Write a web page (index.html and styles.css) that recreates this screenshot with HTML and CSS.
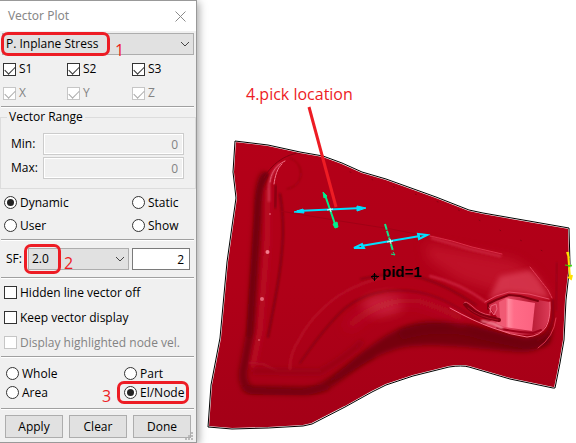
FILE: index.html
```html
<!DOCTYPE html>
<html lang="en">
<head>
<meta charset="utf-8">
<meta name="viewport" content="width=device-width, initial-scale=1">
<title>Vector Plot</title>
<link rel="stylesheet" href="styles.css">
</head>
<body>
<main class="workspace">
  <form class="dialog" onsubmit="return false">
    <header class="titlebar">
      <h1 class="title">Vector Plot</h1>
      <button class="close" type="button" aria-label="Close">
        <svg width="11" height="11" viewBox="0 0 11 11"><path d="M.5.5l10 10M10.5.5l-10 10" stroke="#8a8a8a" fill="none"/></svg>
      </button>
    </header>

    <div class="plot-type">
      <div class="dropdown ringed ring-type">
        <select aria-label="Vector type"><option>P. Inplane Stress</option></select>
        <svg class="chevron" width="10" height="6" viewBox="0 0 10 6"><path d="M1 1l4 4 4-4" stroke="#444" fill="none"/></svg>
      </div>
      <span class="note note-1">1</span>
    </div>

    <div class="checks">
      <label><input type="checkbox" checked>S1</label>
      <label><input type="checkbox" checked>S2</label>
      <label><input type="checkbox" checked>S3</label>
      <label class="off"><input type="checkbox" checked disabled>X</label>
      <label class="off"><input type="checkbox" checked disabled>Y</label>
      <label class="off"><input type="checkbox" checked disabled>Z</label>
    </div>

    <hr>

    <fieldset class="range">
      <legend>Vector Range</legend>
      <div class="fields">
        <label for="min">Min:</label><input id="min" type="text" value="0" disabled>
        <label for="max">Max:</label><input id="max" type="text" value="0" disabled>
      </div>
    </fieldset>

    <div class="radios mode">
      <label><input type="radio" name="mode" checked>Dynamic</label>
      <label><input type="radio" name="mode">Static</label>
      <label><input type="radio" name="mode">User</label>
      <label><input type="radio" name="mode">Show</label>
    </div>

    <hr>

    <div class="scale">
      <label for="sf">SF:</label>
      <div class="dropdown ringed ring-scale">
        <select id="sf"><option>2.0</option></select>
        <svg class="chevron" width="10" height="6" viewBox="0 0 10 6"><path d="M1 1l4 4 4-4" stroke="#444" fill="none"/></svg>
        <span class="note note-2">2</span>
      </div>
      <input type="text" value="2" aria-label="Scale factor">
    </div>

    <hr>

    <div class="options">
      <label><input type="checkbox">Hidden line vector off</label>
      <label><input type="checkbox">Keep vector display</label>
      <label class="off"><input type="checkbox" disabled>Display highlighted node vel.</label>
    </div>

    <hr>

    <div class="radios target">
      <label><input type="radio" name="target">Whole</label>
      <label><input type="radio" name="target">Part</label>
      <label><input type="radio" name="target">Area</label>
      <label class="ringed ring-target"><input type="radio" name="target" checked>El/Node</label>
      <span class="note note-3">3</span>
    </div>

    <hr>

    <div class="actions">
      <button type="button">Apply</button>
      <button type="button">Clear</button>
      <button type="button">Done</button>
      <svg class="grip" width="8" height="8" viewBox="0 0 8 8"><path d="M6 0h2v2H6zM3 3h2v2H3zM6 3h2v2H6zM0 6h2v2H0zM3 6h2v2H3zM6 6h2v2H6z" fill="#bbb"/></svg>
    </div>
  </form>

  <svg class="model" viewBox="197 0 379 443" role="img" aria-label="Stamped part with stress vectors">
    <defs>
      <linearGradient id="base" x1="0" y1="0" x2="0" y2="1">
        <stop offset="0" stop-color="#b40018"/><stop offset=".5" stop-color="#b00018"/><stop offset="1" stop-color="#a40017"/>
      </linearGradient>
      <linearGradient id="pocket" x1="0" y1="0" x2="1" y2="0">
        <stop offset="0" stop-color="#f0506c"/><stop offset=".12" stop-color="#ff8a9e"/><stop offset=".3" stop-color="#ff6c88"/><stop offset="1" stop-color="#fb6280"/>
      </linearGradient>
      <linearGradient id="bowl" x1="0" y1="0" x2="1" y2="0">
        <stop offset="0" stop-color="#c8203a"/><stop offset=".35" stop-color="#e44460"/><stop offset=".7" stop-color="#b81a34"/><stop offset="1" stop-color="#dc3c58"/>
      </linearGradient>
      <filter id="b1" x="-20%" y="-20%" width="140%" height="140%"><feGaussianBlur stdDeviation="1"/></filter>
      <filter id="b3" x="-30%" y="-30%" width="160%" height="160%"><feGaussianBlur stdDeviation="2.5"/></filter>
      <filter id="b6" x="-40%" y="-60%" width="180%" height="220%"><feGaussianBlur stdDeviation="6"/></filter>
      <path id="sheet" d="M235 141L268 145 300 152 323 156 342 163 362 172 386 179 436 197 469 210 483 213 569 228 570 264 566 300 564 340 560 363 555 388 553 388 510 379 469 367Q462 365 449 367L413 376 386 385 372 392 345 407 312 424 303 426 268 428 232 429 208 427 211 385 220 338 227 262 236 198 233 172Z"/>
      <clipPath id="clip"><use href="#sheet"/></clipPath>
    </defs>

    <use href="#sheet" fill="url(#base)"/>
    <g clip-path="url(#clip)" fill="none" stroke-linecap="round" stroke-linejoin="round">
      <!-- walls in shadow -->
      <path d="M264 176Q258 185 258 215L251 330 243 372Q242 389 254 390L303 391C330 391 345 368 370 355" stroke="#760010" stroke-width="8" filter="url(#b3)"/>
      <path d="M266 175Q258 184 257 215L249 335" stroke="#740010" stroke-width="5" filter="url(#b1)"/>
      <path d="M320 386C345 372 372 336 412 324C450 314 488 330 520 339Q548 343 553 319L552 336Q543 353 520 352C490 351 450 343 412 346C373 350 345 380 320 386Z" fill="#76000f" filter="url(#b3)"/>
      <path d="M404 334Q445 323 480 334L526 344 545 340" stroke="#700010" stroke-width="10" filter="url(#b3)"/>
      <path d="M246 388L252 391 302 393 326 387" stroke="#78000f" stroke-width="6" filter="url(#b3)"/>

      <!-- left bead -->
      <path d="M310 154C292 149 272 162 264 178" stroke="#850011"/>
      <path d="M290 158Q301 162 301 175Q299 187 287 189" stroke="#8c0013" stroke-width="1" filter="url(#b1)"/>
      <path d="M280 194Q283 211 283 234 282 263 275 300L268 337" stroke="#7c0011" stroke-width="2" filter="url(#b1)"/>
      <path d="M276 186L275 207" stroke="#850012" stroke-width="3" filter="url(#b1)"/>
      <path d="M268 190L267 245 260 330 253 366" stroke="#ba1028" stroke-width="5" filter="url(#b3)"/>
      <path d="M270 182Q272 167 285 161M274 184Q276 169 282 164" stroke="#f27a8e" stroke-width="1" stroke-dasharray="5 1"/>
      <path d="M269 201L269 185Q271 171 280 164" stroke="#d33a53" stroke-width="2" filter="url(#b1)"/>
      <g fill="#f27d8e"><circle cx="267.500" cy="252" r="2"/><circle cx="262" cy="299" r="2" opacity=".8"/><circle cx="270" cy="214" r="1" opacity=".6"/><circle cx="259" cy="340" r="1" opacity=".6"/></g>
      <path d="M250 363L263 364 277 371 320 371" stroke="#b0102a" stroke-width="2" filter="url(#b1)"/>
      <path d="M254 371L320 372Q344 359 361 343" stroke="#960014" stroke-width="5" filter="url(#b3)"/>

      <!-- arched ridge -->
      <path d="M300 363C313 345 320 333 339 314C357 295 385 287 417 292C447 297 465 314 492 328" stroke="#8a0012" stroke-width="2" filter="url(#b1)"/>
      <path d="M290 369Q289 355 300 338 312 315 338 296 361 281 394 275" stroke="#b8142a" stroke-width="2" filter="url(#b1)"/>
      <path d="M361 279Q394 271 422 278 448 286 476 305" stroke="#8a0012" stroke-width="2" filter="url(#b1)"/>
      <path d="M430 276Q460 283 486 302" stroke="#d02a44" stroke-width="2" filter="url(#b1)"/>
      <ellipse cx="383" cy="305" rx="20" ry="8" fill="#d83a50" transform="rotate(-8 383 305)" filter="url(#b6)"/>
      <path d="M350 325Q382 297 419 301 444 309 463 319" stroke="#b81028" stroke-width="8" filter="url(#b6)"/>

      <!-- crest above the pocket -->
      <path d="M424 243L490 255 515 260 534 273 549 293 545 306 503 294 459 280 429 260Z" fill="#ce2039" opacity=".5" filter="url(#b6)"/>
      <path d="M500 276L530 270 538 278 550 298 524 293 508 292 488 300Z" fill="#e24961" opacity=".6" filter="url(#b3)"/>
      <path d="M430 236L452 241 472 247 502 254" stroke="#de334c" stroke-width="1"/>
      <path d="M432 238L470 249 500 256" stroke="#c8203a" stroke-width="3" filter="url(#b1)"/>
      <path d="M530 267L548 290 552 298" stroke="#e14059" stroke-width="1" stroke-dasharray="3 1"/>
      <path d="M280 211L340 221 391 229 426 236" stroke="#a00016"/>
      <path d="M350 172L450 206 555 257" stroke="#8a0012" stroke-dasharray="1 22"/>

      <!-- pocket -->
      <path d="M487 304L508 295 538 300 550 302Q552 321 541 332 532 337 508 333L484 325 497 317Z" fill="url(#bowl)"/>
      <path d="M505 298L535 303 532 331 505 327Z" fill="url(#pocket)"/>
      <path d="M499 302L505 299 505 327 496 323 500 318Z" fill="#f05a74"/>
      <path d="M488 309L488 304 496 300 509 295 520 296 538 301" stroke="#80000f" stroke-width="2"/>
      <path d="M485 302L496 296 509 292 529 294 549 299" stroke="#e64c66" stroke-width="1"/>
      <path d="M497 328Q514 332 533 333L541 330" stroke="#a0001a" stroke-width="2"/>
      <path d="M465 304Q471 312 486 317L499 320" stroke="#80000f" stroke-width="4"/>
      <path d="M464 303Q465 300 472 306 480 314 490 315" stroke="#dc4860"/>
      <path d="M468 308Q478 317 498 320" stroke="#a80c22"/>
      <path d="M490 313L491 306 496 304 497 309 494 315 489 308" stroke="#ed6880"/>
      <path d="M450 308Q473 321 493 328 511 335 527 337 540 336 546 327 551 318 550 302" stroke="#f46c84" stroke-width="1"/>
      <path d="M482 321L494 324 502 328" stroke="#f796a5" stroke-width="2" filter="url(#b1)"/>
      <path d="M553 300L553 319Q549 335 538 340" stroke="#800010" stroke-width="2" filter="url(#b1)"/>
      <path d="M556 318Q554 337 538 348" stroke="#da334b" stroke-width="1"/>
      <path d="M557 263L556 310" stroke="#98001a" stroke-width="2" filter="url(#b1)"/>
    </g>
    <use href="#sheet" fill="none" stroke="#fff" stroke-width="2"/>
    <use href="#sheet" fill="none" stroke="#000" stroke-width="1"/>

    <path d="M309 107L336 207" fill="none" stroke="#ed1c24" stroke-width="3"/>

    <!-- first vector pair -->
    <g stroke="#00e0ff" fill="#00e0ff"><path d="M297 211L362 208" stroke-width="2"/><path d="M294 212l9-3 1 4zM366 208l-9-2v5z"/></g>
    <g stroke="#00f08c" fill="#00f08c"><path d="M325 195L335 224" stroke-width="2"/><path d="M323 192l4 4-3 2zM333 224l4-2 1 5-3 1z"/></g>
    <path d="M327 210l6-1M330 208l1 4" stroke="#dff"/>

    <!-- second vector pair -->
    <g stroke="#00e0ff" fill="none"><path d="M361 246L420 236" stroke-width="2"/><path d="M354 248l8-4 2 4zM427 235l-9-1 1 5z" stroke-width="2"/></g>
    <g stroke="#10e68a" fill="none"><path d="M385 224L393 251" stroke-width="2" stroke-dasharray="6 1"/><path d="M391 254l4 1-2-3"/></g>
    <path d="M387 242l6-1M390 239l1 5" stroke="#dff"/>

    <g fill="none" stroke="#000"><path d="M371 276.500h8M374.500 273v8"/><path d="M374.500 274l3 3-3 3-3-3z"/></g>
    <text class="pid" x="382" y="277">pid=1</text>

    <g fill="none" stroke="#ffe000" stroke-width="2"><path d="M568 252L570 278M567 252l2 6M568 277l3 2 1-4"/></g>
    <path d="M565 265l7 1M568 267l4-2" stroke="#30e000" stroke-width="1"/>

    <text class="pick" x="246" y="100">4.pick location</text>
  </svg>
</main>
</body>
</html>
```

FILE: styles.css
```css
* {
  box-sizing: border-box;
}

body {
  margin: 0;
  background: #fff;
  color: #000;
  font: 12px/16px "Open Sans", "Noto Sans", sans-serif;
}

input,
select,
button {
  margin: 0;
  font: inherit;
  color: inherit;
}

.workspace {
  display: flex;
  align-items: flex-start;
}

/* dialog */
.dialog {
  position: relative;
  z-index: 1;
  flex: 0 0 197px;
  border: solid #999;
  border-width: 1px 1px 1px 0;
  background: #f0f0f0;
  box-shadow: 2px 2px 8px rgba(0, 0, 0, 0.35);
}

.titlebar {
  display: flex;
  align-items: center;
  justify-content: space-between;
  height: 30px;
  padding: 0 10px 0 8px;
  background: #fff;
}

.title {
  margin: 0;
  font: 12px/16px "Noto Sans", sans-serif;
  color: #888;
}

.close {
  display: flex;
  padding: 0;
  border: 0;
  background: none;
}

hr {
  height: 2px;
  margin: 0 2px 0 1px;
  border: 0;
  border-top: 1px solid #a0a0a0;
  background: #fff;
}

label {
  display: flex;
  align-items: center;
  white-space: nowrap;
}

.off {
  color: #838383;
}

/* drop-downs */
.dropdown {
  position: relative;
}

.dropdown select {
  display: block;
  width: 100%;
  height: 22px;
  padding: 0 3px;
  appearance: none;
  border: 1px solid #adadad;
  border-radius: 0;
  background: #e1e1e1;
}

.chevron {
  position: absolute;
  top: 8px;
  right: 4px;
  pointer-events: none;
}

.plot-type {
  position: relative;
  padding: 2px;
}

/* tick boxes and radios */
input[type="checkbox"],
input[type="radio"] {
  position: relative;
  flex: none;
  width: 13px;
  height: 13px;
  margin-right: 3px;
  appearance: none;
  border: 1px solid #333;
  background: #fff;
}

input[type="radio"] {
  border-radius: 50%;
}

input[type="checkbox"]:disabled {
  border-color: #c6c6c6;
}

input[type="checkbox"]:checked::after {
  content: "";
  position: absolute;
  top: 2px;
  left: 1px;
  width: 9px;
  height: 5px;
  border: solid #333;
  border-width: 0 0 1px 1px;
  transform: rotate(-45deg);
}

input[type="checkbox"]:checked:disabled::after {
  border-color: #aaa;
}

input[type="radio"]:checked::after {
  content: "";
  position: absolute;
  inset: 2px;
  border-radius: 50%;
  background: #222;
}

.checks {
  display: grid;
  grid-template-columns: 64fr 65fr 62fr;
  grid-auto-rows: 24px;
  padding: 0 2px 1px 3px;
}

/* min and max */
.range {
  min-width: 0;
  margin: 1px 0 0;
  padding: 8px 11px 9px 10px;
  border: 1px solid #dcdcdc;
}

.range legend {
  margin-left: -4px;
  padding: 0 2px;
}

.fields {
  display: grid;
  grid-template-columns: 32px 1fr;
  grid-auto-rows: 22px;
  row-gap: 2px;
}

input[type="text"] {
  min-width: 0;
  height: 22px;
  padding: 0 5px;
  border: 1px solid #7a7a7a;
  background: #fff;
  text-align: right;
}

input[type="text"]:disabled {
  border-color: #ccc;
  background: #f0f0f0;
  box-shadow: inset 0 0 0 1px #fff;
  color: #838383;
}

/* radio groups */
.radios {
  position: relative;
  display: grid;
}

.mode {
  grid-template-columns: 128fr 64fr;
  grid-auto-rows: 23px;
  padding: 2px 0 2px 4px;
}

.target {
  grid-template-columns: 118fr 72fr;
  grid-auto-rows: 19px;
  padding: 6px 0 6px 6px;
}

/* scale factor */
.scale {
  display: grid;
  grid-template-columns: 22px 100fr 60fr;
  column-gap: 3px;
  padding: 7px 6px;
}

.scale label {
  margin-right: -4px;
}

.scale .dropdown {
  margin-left: -3px;
}

.options {
  display: grid;
  grid-auto-rows: 25px;
  padding: 1px 0 1px 4px;
}

/* buttons */
.actions {
  position: relative;
  display: grid;
  grid-template-columns: repeat(3, 1fr);
  column-gap: 6px;
  padding: 5px 5px 4px;
}

.actions button {
  height: 23px;
  padding: 0;
  border: 1px solid #adadad;
  background: #e1e1e1;
}

.grip {
  position: absolute;
  right: 3px;
  bottom: 2px;
}

/* red call-outs */
.ringed {
  position: relative;
}

.ringed::before {
  content: "";
  position: absolute;
  z-index: 1;
  border: 3px solid #ed1c24;
  border-radius: 7px;
  pointer-events: none;
}

.ring-type::before {
  inset: -1px 84px -1px -1px;
}

.ring-scale::before {
  inset: -4px 68px -4px -4px;
}

.ring-target::before {
  inset: -2px 7px -2px -7px;
}

.note {
  position: absolute;
  font: 16px/20px "Open Sans", sans-serif;
  color: #ed1c24;
}

.note-1 {
  top: 9px;
  left: 115px;
}

.note-2 {
  top: 5px;
  left: 36px;
}

.note-3 {
  top: 28px;
  left: 102px;
}

/* model view */
.model {
  flex: 1;
  min-width: 0;
  height: auto;
}

.pid {
  font: bold 15px "Liberation Sans", sans-serif;
}

.pick {
  font: 16px "Open Sans", sans-serif;
  fill: #ed1c24;
}
```
